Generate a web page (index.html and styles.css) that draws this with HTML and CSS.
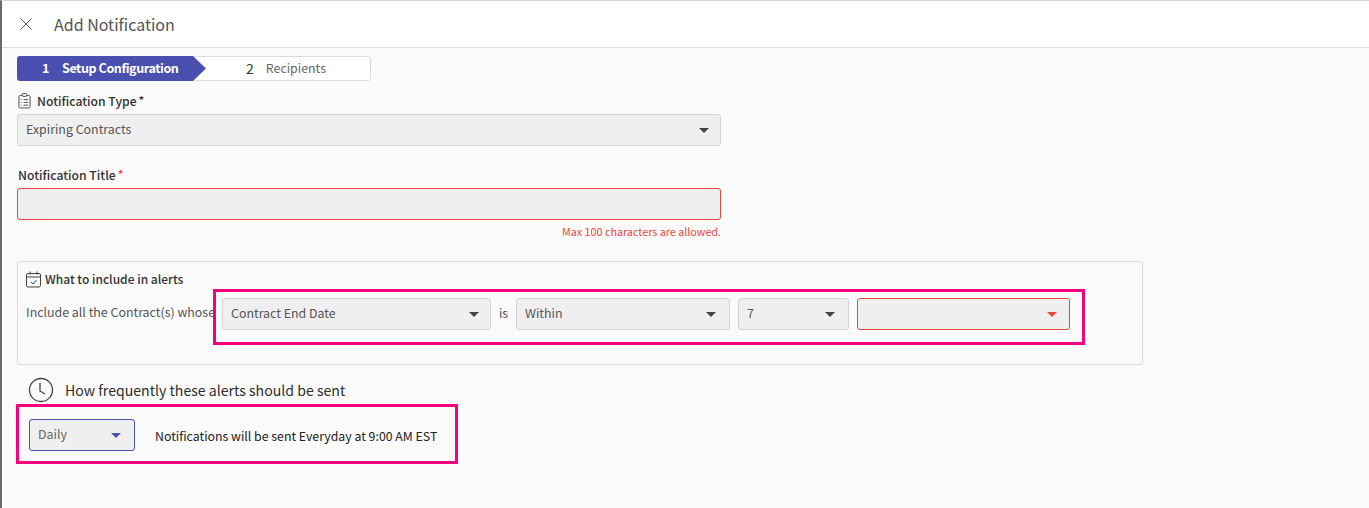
FILE: index.html
```html
<!DOCTYPE html>
<html lang="en">
<head>
<meta charset="utf-8">
<title>Add Notification</title>
<link rel="stylesheet" href="styles.css">
</head>
<body>
<div class="page">
  <header class="topbar">
    <svg class="close" width="12" height="12" viewBox="0 0 12 12"><path d="M.5.5l11 11M11.5.5l-11 11" fill="none" stroke="#555" stroke-width="1"/></svg>
    <h1 class="title">Add Notification</h1>
  </header>
  <main class="content">
    <div class="stepper">
      <div class="step-active"><span class="num">1</span><span>Setup Configuration</span></div>
      <div class="step-next"><span class="num2">2</span><span>Recipients</span></div>
    </div>

    <div class="label label-type">
      <svg width="13" height="16" viewBox="0 0 14 17" fill="none" stroke="#444" stroke-width="1"><rect x="1" y="2.5" width="12" height="13.5" rx="1.5"/><rect x="4.5" y="0.5" width="5" height="3" rx="1" fill="#fafafa"/><path d="M3 7h1M6 7h5M3 10h1M6 10h5M3 13h1M6 13h5"/></svg>
      <span>Notification Type</span><span class="star">*</span>
    </div>
    <div class="select wide"><span>Expiring Contracts</span><i class="caret"></i></div>

    <div class="label label-title"><span>Notification Title</span><span class="star red">*</span></div>
    <div class="select wide error tall"></div>
    <p class="hint">Max 100 characters are allowed.</p>

    <section class="panel">
      <div class="panel-title">
        <svg width="15" height="17" viewBox="0 0 15 17" fill="none" stroke="#444" stroke-width="1"><rect x="0.5" y="2.5" width="14" height="13.5" rx="1.5"/><path d="M0.5 6h14M4 0.5v3M11 0.5v3M5 11l2 2 3.5-4"/></svg>
        <span>What to include in alerts</span>
      </div>
      <div class="panel-row">
        <span class="row-text">Include all the Contract(s) whose</span>
        <div class="select s1"><span>Contract End Date</span><i class="caret"></i></div>
        <span class="is">is</span>
        <div class="select s2"><span>Within</span><i class="caret"></i></div>
        <div class="select s3"><span>7</span><i class="caret"></i></div>
        <div class="select s4 error"><i class="caret caret-red"></i></div>
      </div>
    </section>

    <div class="freq">
      <svg width="26" height="26" viewBox="0 0 26 26" fill="none" stroke="#444" stroke-width="1.3"><circle cx="13" cy="13" r="11.5"/><path d="M12 6v8l5 3"/></svg>
      <span>How frequently these alerts should be sent</span>
    </div>
    <div class="freq-row">
      <div class="select daily"><span>Daily</span><i class="caret caret-blue"></i></div>
      <span class="freq-text">Notifications will be sent Everyday at 9:00 AM EST</span>
    </div>
  </main>
  <div class="mark mark-a"></div>
  <div class="mark mark-b"></div>
</div>
</body>
</html>
```

FILE: styles.css
```css
* { box-sizing: border-box; }
html, body { margin: 0; height: 100%; }
body {
  background: #fafafa;
  color: #444;
  font-family: "Noto Sans CJK SC", "Source Sans Pro", "Noto Sans", sans-serif;
  font-size: 12.4px;
  overflow: hidden;
}
.page {
  position: relative;
  height: 508px;
  border-left: 2px solid #6a6a6a;
  border-top: 1px solid #d8d8d8;
}
.topbar {
  display: flex;
  align-items: center;
  height: 47px;
  background: #fff;
  border-bottom: 1px solid #e0e0e0;
  padding-left: 18px;
}
.title {
  margin: 0 0 0 22px;
  font-size: 16px;
  font-weight: 400;
  color: #555;
}
.content { padding: 8px 0 0 15px; }
.stepper {
  display: flex;
  width: 354px;
  height: 25px;
  background: #fff;
  border: 1px solid #dcdcdc;
  border-radius: 3px;
  position: relative;
}
.step-active {
  display: flex;
  align-items: center;
  width: 189px;
  height: 25px;
  margin: -1px 0 0 -1px;
  padding: 0 0 2px 25px;
  background: #4a50b0;
  color: #fff;
  font-size: 12.5px;
  font-weight: 700;
  letter-spacing: -0.4px;
  clip-path: polygon(0 0, 176px 0, 189px 50%, 176px 100%, 0 100%);
  border-radius: 3px 0 0 3px;
}
.step-active .num { margin-right: 13px; }
.step-next {
  display: flex;
  align-items: center;
  padding: 0 0 2px 40px;
  color: #666;
}
.num2 { margin-right: 12px; font-size: 14px; color: #333; margin-top: 1px; }
.label {
  display: flex;
  align-items: center;
  font-size: 12.2px;
  font-weight: 500;
  color: #333;
  height: 18px;
  margin-left: 1px;
}
.label-type { margin-top: 11px; gap: 6px; }
.label-title { margin-top: 20px; }
.star { font-size: 12px; margin: -3px 0 0 2px; }
.label-type .star { margin-left: -4px; }
.red { color: #e8483a; }
.select {
  display: flex;
  align-items: center;
  justify-content: space-between;
  height: 32px;
  background: #efefef;
  border: 1px solid #d4d4d4;
  border-radius: 3px;
  padding: 0 11px 0 8px;
  color: #555;
}
.select span { padding-bottom: 3px; }
.wide { width: 704px; }
.label-type + .select { margin-top: 4px; }
.label-title + .select { margin-top: 4px; }
.error { border-color: #e8483a; }
.caret {
  width: 0;
  height: 0;
  border-left: 5px solid transparent;
  border-right: 5px solid transparent;
  border-top: 5px solid #444;
}
.caret-red { border-top-color: #e8483a; }
.caret-blue { border-top-color: #4a50b0; }
.hint {
  width: 704px;
  margin: 4px 0 0;
  text-align: right;
  font-size: 10.75px;
  line-height: 16px;
  color: #e8483a;
}
.panel {
  width: 1126px;
  height: 104px;
  margin-top: 21px;
  padding: 8px 8px 0;
  border: 1px solid #dcdcdc;
  border-radius: 3px;
}
.panel-title {
  display: flex;
  align-items: center;
  gap: 4px;
  height: 18px;
  font-size: 12px;
  font-weight: 500;
  color: #333;
}
.panel-title span { padding-bottom: 2px; }
.panel-row {
  display: flex;
  align-items: center;
  margin-top: 10px;
}
.row-text { width: 196px; white-space: nowrap; color: #555; padding-bottom: 5px; }
.s1 { width: 269px; }
.is { width: 25px; text-align: center; color: #555; padding-bottom: 3px; }
.s2 { width: 214px; padding-right: 13px; }
.s3 { width: 111px; margin-left: 8px; padding-right: 13px; }
.s4 { width: 213px; margin-left: 8px; padding-right: 12px; justify-content: flex-end; }
.freq {
  display: flex;
  align-items: center;
  gap: 11px;
  margin: 12px 0 0 11px;
  height: 26px;
  font-size: 14.12px;
  font-weight: 400;
  color: #2e2e2e;
}
.freq-row {
  display: flex;
  align-items: center;
  margin: 16px 0 0 12px;
}
.daily {
  width: 106px;
  padding-right: 13px;
  border-color: #4a50b0;
  color: #666;
}
.freq-text {
  margin-left: 20px;
  padding-top: 1px;
  font-size: 12.33px;
  font-weight: 400;
  color: #222;
}
.mark {
  position: absolute;
  border: 3px solid #f5007e;
}
.mark-a { left: 211px; top: 288px; width: 872px; height: 56px; }
.mark-b { left: 14px; top: 403px; width: 442px; height: 60px; }
```
